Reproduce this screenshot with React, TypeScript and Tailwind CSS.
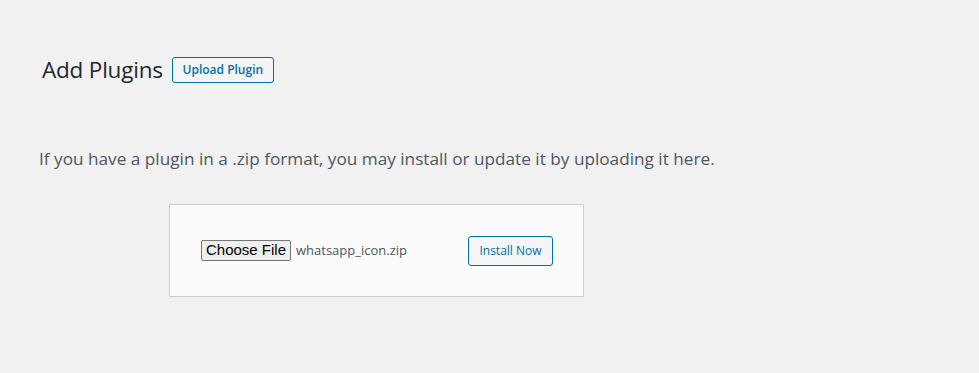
export default function App() {
  return (
    <div className="min-h-[373px] w-[979px] bg-[#f1f1f1] font-['Open_Sans',sans-serif] text-[#23282d]">
      <div className="flex items-center pl-[42px] pt-[57px]">
        <h1 className="text-[22.5px] leading-[26px] font-normal tracking-[-0.2px]">Add Plugins</h1>
        <span className="ml-[9px] flex h-[26px] w-[102px] items-center justify-center rounded-[3px] border border-[#0071a1] bg-[#f3f5f6] text-[12px] font-semibold text-[#0071a1]">
          Upload Plugin
        </span>
      </div>
      <p className="mt-[64px] pl-[39px] text-[17.2px] leading-[24px] text-[#50575e]">
        If you have a plugin in a .zip format, you may install or update it by uploading it here.
      </p>
      <div className="ml-[169px] mt-[33px] flex h-[93px] w-[415px] items-center border border-[#ccd0d4] bg-[#fafafa] pl-[31px]">
        <span className="flex h-[21px] w-[90px] items-center justify-center rounded-[2px] border border-[#767676] bg-[#efefef] font-['Liberation_Sans',sans-serif] text-[15px] text-black">
          Choose File
        </span>
        <span className="ml-[5px] text-[13px] text-[#50575e]">whatsapp_icon.zip</span>
        <span className="ml-[61px] flex h-[30px] w-[85px] items-center justify-center rounded-[3px] border border-[#0071a1] bg-[#f3f5f6] text-[12px] text-[#0071a1]">
          Install Now
        </span>
      </div>
    </div>
  );
}
